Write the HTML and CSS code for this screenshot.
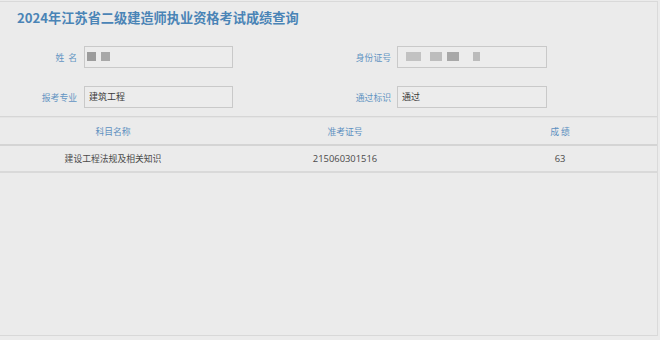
FILE: index.html
```html
<!DOCTYPE html>
<html lang="zh-CN">
<head>
<meta charset="utf-8">
<title>成绩查询</title>
<link rel="stylesheet" href="styles.css">
</head>
<body>
<div class="page">
  <h1 class="title">2024年江苏省二级建造师执业资格考试成绩查询</h1>
  <div class="form">
    <div class="row">
      <div class="field f1">
        <span class="label">姓&nbsp;&nbsp;名</span>
        <div class="box">
          <span class="mask m-a"></span><span class="mask m-b"></span>
        </div>
      </div>
      <div class="field f2">
        <span class="label">身份证号</span>
        <div class="box">
          <span class="mask m-c"></span><span class="mask m-d"></span><span class="mask m-e"></span><span class="mask m-f"></span>
        </div>
      </div>
    </div>
    <div class="row">
      <div class="field f1">
        <span class="label">报考专业</span>
        <div class="box">建筑工程</div>
      </div>
      <div class="field f2">
        <span class="label">通过标识</span>
        <div class="box">通过</div>
      </div>
    </div>
  </div>
  <div class="table">
    <div class="tr th">
      <div class="c1">科目名称</div>
      <div class="c2">准考证号</div>
      <div class="c3">成&nbsp;绩</div>
    </div>
    <div class="tr td">
      <div class="c1">建设工程法规及相关知识</div>
      <div class="c2 num">215060301516</div>
      <div class="c3 num">63</div>
    </div>
  </div>
</div>
</body>
</html>
```
FILE: styles.css
```css
html, body {
  margin: 0;
  padding: 0;
  background: #ebebeb;
}
body {
  font-family: "Noto Sans CJK SC", "Noto Sans", sans-serif;
  color: #4a4a4a;
}
.page {
  width: 657px;
  height: 333px;
  margin-top: 1px;
  border-top: 1px solid #d9d9d9;
  border-right: 1px solid #dadada;
  border-bottom: 1px solid #d8d8d8;
  background: #ebebeb;
}
.title {
  margin: 0;
  padding: 7px 0 0 17px;
  height: 22px;
  font-size: 13.2px;
  line-height: 18px;
  font-weight: 700;
  color: #4a84b6;
}
.form {
  padding-top: 15px;
  height: 70px;
  border-bottom: 1px solid #d6d6d6;
}
.row {
  display: flex;
  height: 22px;
  margin-bottom: 18px;
}
.field {
  display: flex;
  align-items: center;
}
.label {
  font-size: 8.8px;
  color: #6294c2;
  text-align: right;
  white-space: nowrap;
}
.f1 .label {
  width: 77px;
  margin-right: 7px;
}
.f2 .label {
  width: 158px;
  margin-right: 6px;
}
.box {
  position: relative;
  box-sizing: border-box;
  width: 150px;
  height: 22px;
  border: 1px solid #c9c9c9;
  background: #ececec;
  font-size: 9px;
  line-height: 20px;
  padding-left: 4px;
  color: #3a3a3a;
}
.f1 .box { width: 149px; }
.mask {
  position: absolute;
  top: 5px;
  height: 9px;
  background: #a9a9a9;
  filter: blur(0.7px);
}
.m-a { left: 2px; width: 9px; background: #9c9c9c; }
.m-b { left: 16px; width: 9px; background: #a8a8a8; }
.m-c { left: 8px; width: 15px; background: #c2c2c2; }
.m-d { left: 32px; width: 12px; background: #bdbdbd; }
.m-e { left: 49px; width: 12px; background: #a8a8a8; }
.m-f { left: 75px; width: 7px; background: #bbbbbb; }
.table {
  width: 657px;
}
.tr {
  display: flex;
  align-items: center;
}
.th {
  height: 26px;
  border-bottom: 2px solid #d4d4d4;
  border-top: 1px solid #e4e4e4;
  color: #5b8fc0;
  font-size: 8.8px;
}
.td {
  height: 25px;
  border-bottom: 2px solid #d9d9d9;
  font-size: 8.8px;
  color: #4a4a4a;
}
.c1, .c2, .c3 {
  text-align: center;
}
.c1 { width: 226px; }
.c2 { width: 238px; }
.c3 { width: 192px; }
.num {
  font-family: "Open Sans", "Noto Sans", sans-serif;
  font-size: 9.4px;
  color: #4a4a4a;
}
```
